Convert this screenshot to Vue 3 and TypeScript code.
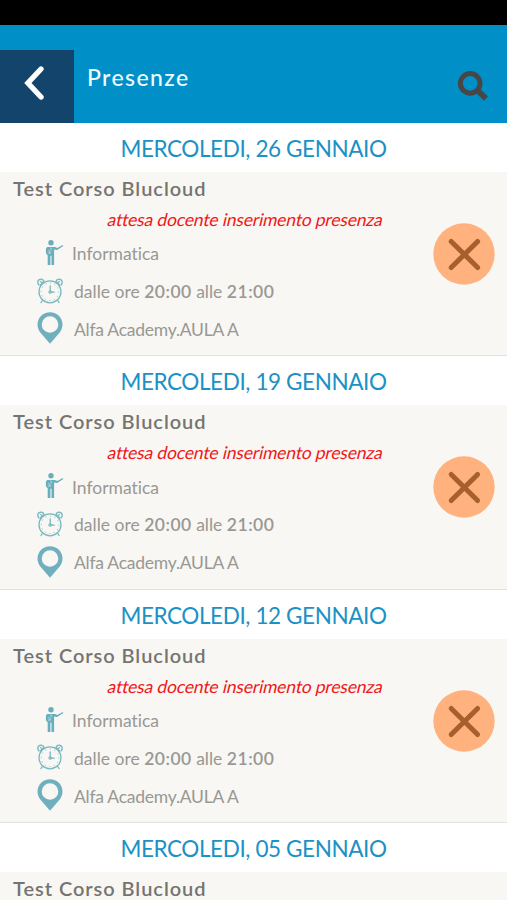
<script setup lang="ts">
interface Lesson {
  date: string
  course: string
  status: string
  subject: string
  from: string
  to: string
  room: string
}

const dates: string[] = ['26', '19', '12', '05']
const lessons: Lesson[] = dates.map((day) => ({
  date: `MERCOLEDI, ${day} GENNAIO`,
  course: 'Test Corso Blucloud',
  status: 'attesa docente inserimento presenza',
  subject: 'Informatica',
  from: '20:00',
  to: '21:00',
  room: 'Alfa Academy.AULA A',
}))
</script>

<template>
  <div class="screen">
    <div class="status-bar"></div>
    <header class="header">
      <button class="back" aria-label="Indietro">
        <svg width="22" height="38" viewBox="0 0 22 38">
          <path d="M18 5 4.900 19 18 33" fill="none" stroke="#fff" stroke-width="5.400" stroke-linecap="round" stroke-linejoin="miter" />
        </svg>
      </button>
      <h1 class="title">Presenze</h1>
      <button class="search" aria-label="Cerca">
        <svg width="32" height="32" viewBox="0 0 32 32">
          <circle cx="13.2" cy="13.4" r="9.8" fill="none" stroke="#474747" stroke-width="5" />
          <path d="M20.2 20.2 29 28.6" fill="none" stroke="#474747" stroke-width="5.8" />
        </svg>
      </button>
    </header>
    <main>
      <section v-for="lesson in lessons" :key="lesson.date" class="lesson">
        <h2 class="date">{{ lesson.date }}</h2>
        <article class="card">
          <h3 class="course">{{ lesson.course }}</h3>
          <p class="status"><span>{{ lesson.status }}</span></p>
          <div class="row subject">
            <svg class="icon" width="28" height="28" viewBox="0 0 28 28" fill="#68aebd">
              <circle cx="15" cy="3.800" r="2.7" />
              <path d="M11 8h8l2.3 1 5.5-3 .5.9-6.2 4.200-3-.5V26h-2.600v-9.200h-1.1V26h-2.700v-9.600l-1.800-2.100V9.700z" />
              <path d="M15 8.5v3.200M12.300 11.200l2.500 2.800h-3" fill="none" stroke="#d5e7e8" stroke-width=".8" />
            </svg>
            <span>{{ lesson.subject }}</span>
          </div>
          <div class="row">
            <svg class="icon" width="28" height="28" viewBox="0 0 28 28" fill="none" stroke="#7ab8c0" stroke-linecap="round">
              <circle cx="14" cy="14.8" r="11" stroke-width="1.3" />
              <circle cx="14" cy="14.8" r="8.8" stroke-width=".8" stroke-dasharray=".5 4.1" />
              <path d="M2.7 7.8C.8 4.8 2 2.500 4.500 2.200c2-.2 3 .8 3.400 2.300L4.200 8M25.300 7.800c1.900-3 .7-5.300-1.800-5.600-2-.2-3 .8-3.400 2.300L23.800 8" stroke-width="1.4" />
              <path d="m4.600 4.400 1.400 1.400M23.400 4.400 22 5.800M6.200 23.700l-1.300 1.900M21.800 23.700l1.300 1.900" stroke-width="1.2" />
              <path d="M14.200 8.800v6.400h4" stroke-width="1.3" />
              <circle cx="14.200" cy="15" r="1.400" stroke-width="1" />
            </svg>
            <span>dalle ore <b>{{ lesson.from }}</b> alle <b>{{ lesson.to }}</b></span>
          </div>
          <div class="row room">
            <svg class="icon" width="28" height="34" viewBox="0 0 28 34">
              <path d="M14 1.200C7 1.200 1.500 6.600 1.500 13.400c0 3.200 1.100 5.600 2.800 8L14 32.700l9.700-11.300c1.700-2.400 2.800-4.800 2.800-8C26.500 6.600 21 1.200 14 1.200zm0 4a8.300 8.300 0 1 1 0 16.600 8.300 8.300 0 0 1 0-16.600z" fill="#70b0be" />
            </svg>
            <span>{{ lesson.room }}</span>
          </div>
          <button class="absent" aria-label="Assente">
            <svg width="62" height="62" viewBox="0 0 62 62">
              <circle cx="31" cy="31" r="30.700" fill="#ffb17e" />
              <path d="m18.200 18.500 26.400 26M44.600 18.500l-26.400 26" fill="none" stroke="#a65f2d" stroke-width="5" stroke-linecap="round" />
            </svg>
          </button>
        </article>
      </section>
    </main>
  </div>
</template>

<style>
body {
  margin: 0;
  overflow: hidden;
}
</style>

<style scoped>
.screen {
  width: 507px;
  height: 900px;
  overflow: hidden;
  background: #fff;
  font-family: Lato, "Liberation Sans", sans-serif;
  font-variant-ligatures: none;
}
h1,
h2,
h3,
p {
  margin: 0;
  font-weight: 400;
}
button {
  padding: 0;
  border: 0;
  background: none;
}
svg {
  display: block;
}
.status-bar {
  height: 25px;
  background: #000;
}
.header {
  display: flex;
  align-items: flex-end;
  box-sizing: border-box;
  height: 98px;
  background: #0090c7;
}
.back {
  display: flex;
  justify-content: center;
  width: 74px;
  height: 73px;
  padding: 14px 7px 0 0;
  box-sizing: border-box;
  background: #13446b;
}
.title {
  flex: 1;
  align-self: flex-start;
  padding: 37px 0 0 13px;
  font-size: 23px;
  font-weight: 500;
  line-height: 30px;
  letter-spacing: 1.400px;
  color: #effaff;
}
.search {
  margin: 0 18px 21px 0;
}
.lesson {
  box-sizing: border-box;
  height: 233.400px;
  display: flex;
  flex-direction: column;
}
.date {
  height: 49px;
  line-height: 51px;
  text-align: center;
  font-size: 22.500px;
  letter-spacing: -0.400px;
  color: #1b91c4;
}
.card {
  position: relative;
  flex: 1;
  box-sizing: border-box;
  border-bottom: 1.500px solid #e2e2e0;
  background: #f8f7f3;
}
.course {
  padding: 4px 0 0 13px;
  height: 26px;
  line-height: 25px;
  font-size: 20px;
  font-weight: 600;
  letter-spacing: 0.950px;
  color: #757471;
}
.status {
  padding-left: 108px;
  height: 32px;
  line-height: 35px;
  font-size: 17.500px;
  letter-spacing: -0.180px;
  color: #f01818;
}
.status span {
  display: inline-block;
  transform: skewX(-13deg);
}
.row {
  display: flex;
  align-items: center;
  height: 37.700px;
  padding-left: 36px;
  gap: 10px;
  font-size: 17.500px;
  color: #999894;
  white-space: pre;
}
.row span {
  padding-top: 2px;
}
.subject {
  gap: 8px;
}
.row b {
  font-weight: 600;
  letter-spacing: 0.500px;
}
.room {
  letter-spacing: -0.250px;
}
.absent {
  position: absolute;
  right: 12px;
  top: 51px;
}
</style>
